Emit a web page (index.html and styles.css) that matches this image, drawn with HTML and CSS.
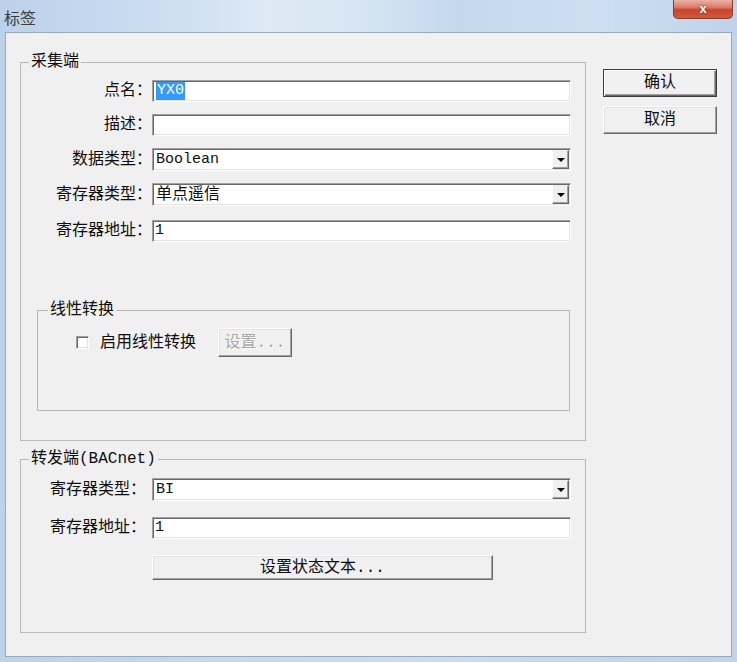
FILE: index.html
```html
<!DOCTYPE html>
<html lang="zh-CN">
<head>
<meta charset="utf-8">
<title>标签</title>
<link rel="stylesheet" href="styles.css">
</head>
<body>
<div class="window">
  <div class="titlebar">
    <span class="title">标签</span>
    <span class="close">x</span>
  </div>
  <div class="client">
    <div class="main">
      <fieldset class="group group-collect">
        <legend class="legend">采集端</legend>
        <div class="rows">
          <div class="row">
            <span class="lbl">点名：</span>
            <div class="edit"><span class="sel">YX0</span></div>
          </div>
          <div class="row">
            <span class="lbl">描述：</span>
            <div class="edit"></div>
          </div>
          <div class="row">
            <span class="lbl">数据类型：</span>
            <div class="combo"><span class="val">Boolean</span><span class="drop"><span class="tri"></span></span></div>
          </div>
          <div class="row">
            <span class="lbl">寄存器类型：</span>
            <div class="combo"><span class="val val-cjk">单点遥信</span><span class="drop"><span class="tri"></span></span></div>
          </div>
          <div class="row row-last">
            <span class="lbl">寄存器地址：</span>
            <div class="edit"><span class="val">1</span></div>
          </div>
        </div>
        <fieldset class="group group-linear">
          <legend class="legend legend-inner">线性转换</legend>
          <div class="check-row">
            <span class="checkbox"></span>
            <span class="check-label">启用线性转换</span>
            <button class="btn btn-disabled" type="button">设置...</button>
          </div>
        </fieldset>
      </fieldset>
      <fieldset class="group group-forward">
        <legend class="legend">转发端(BACnet)</legend>
        <div class="rows rows-forward">
          <div class="row">
            <span class="lbl lbl-forward">寄存器类型：</span>
            <div class="combo"><span class="val">BI</span><span class="drop"><span class="tri"></span></span></div>
          </div>
          <div class="row">
            <span class="lbl lbl-forward">寄存器地址：</span>
            <div class="edit"><span class="val">1</span></div>
          </div>
          <button class="btn btn-wide" type="button">设置状态文本...</button>
        </div>
      </fieldset>
    </div>
    <div class="side">
      <button class="btn btn-side btn-default" type="button">确认</button>
      <button class="btn btn-side" type="button">取消</button>
    </div>
  </div>
</div>
</body>
</html>
```

FILE: styles.css
```css
html, body {
  margin: 0;
  padding: 0;
}

body {
  width: 737px;
  height: 662px;
  overflow: hidden;
  background: #c2d5ea;
  font-family: "Liberation Mono", "Noto Sans CJK SC", monospace;
  font-size: 16px;
  color: #0e0e0e;
}

.window {
  display: flex;
  flex-direction: column;
  height: 662px;
  background: linear-gradient(90deg, #bdd2e8 0%, #c6d9ed 30%, #cadcee 60%, #bfd3e9 100%);
}

.titlebar {
  height: 32px;
  flex: none;
  display: flex;
  justify-content: space-between;
  align-items: flex-start;
  padding-left: 4px;
  background: linear-gradient(90deg, #bcd2ea 0%, #c8dbef 18%, #dde9f5 36%, #d8e6f3 48%, #c4d8ed 62%, #cddff1 80%, #bed3ea 100%);
}

.title {
  margin-top: 8px;
  font-family: "Noto Sans CJK SC", sans-serif;
  font-size: 16px;
  line-height: 18px;
  color: #3c3c3c;
}

.close {
  box-sizing: border-box;
  width: 60px;
  height: 19px;
  margin-right: 4px;
  border: 1px solid #8a3a2e;
  border-top: none;
  border-radius: 0 0 5px 5px;
  background: linear-gradient(#eab2a6 0%, #dc7b67 40%, #c8452c 55%, #cf5a3e 100%);
  color: #fff;
  font-family: "Liberation Sans", sans-serif;
  font-weight: bold;
  font-size: 13px;
  line-height: 17px;
  text-align: center;
  text-shadow: 0 0 2px #6a1f14;
}

.client {
  flex: 1;
  margin: 0 5px 5px;
  border: 1px solid #97aac0;
  background: #f0f0f0;
  display: flex;
  align-items: flex-start;
}

.main {
  margin-left: 14px;
  padding-top: 21px;
  display: flex;
  flex-direction: column;
}

.group {
  box-sizing: border-box;
  margin: 0;
  padding: 0;
  min-width: 0;
  border: 1px solid #b8b8b8;
}

.legend {
  margin-left: 8px;
  padding: 0 2px;
  line-height: 16px;
  font-size: 16px;
}

.legend-inner {
  margin-left: 10px;
}

.group-collect {
  width: 566px;
  height: 387px;
  padding-top: 10px;
}

.rows {
  display: flex;
  flex-direction: column;
  gap: 12px;
}

.row {
  display: flex;
  align-items: center;
}

.row-last {
  margin-top: 2px;
}

.lbl {
  width: 131px;
  text-align: right;
  line-height: 22px;
  white-space: nowrap;
}

.lbl-forward {
  width: 125px;
  margin-right: 6px;
}

.edit,
.combo {
  box-sizing: border-box;
  width: 419px;
  height: 22px;
  background: #fff;
  border: 1px solid;
  border-color: #a0a0a0 #fff #fff #a0a0a0;
  box-shadow: inset 1px 1px 0 #696969, inset -1px -1px 0 #e3e3e3;
  display: flex;
  align-items: center;
  padding-left: 2px;
  line-height: 18px;
}

.combo {
  height: 23px;
  padding: 1px 1px 1px 3px;
  align-items: stretch;
}

.combo .val {
  align-self: center;
}

.val {
  font-size: 15px;
  white-space: nowrap;
}

.val-cjk {
  font-size: 16px;
}

.sel {
  margin-left: 1px;
  padding: 0 1px;
  background: #3399ff;
  color: #fff;
  font-size: 15px;
  line-height: 18px;
}

.drop {
  box-sizing: border-box;
  width: 17px;
  margin-left: auto;
  background: #f0f0f0;
  border: 1px solid;
  border-color: #f0f0f0 #696969 #696969 #ffffff;
  box-shadow: inset -1px -1px 0 #a0a0a0;
  display: flex;
  align-items: center;
  justify-content: center;
}

.tri {
  width: 0;
  height: 0;
  border-left: 4px solid transparent;
  border-right: 4px solid transparent;
  border-top: 4px solid #000;
}

.group-linear {
  width: 533px;
  height: 109px;
  margin: 60px 0 0 16px;
  padding: 10px 0 0 0;
}

.check-row {
  display: flex;
  align-items: center;
  height: 29px;
  margin-left: 38px;
}

.checkbox {
  box-sizing: border-box;
  width: 13px;
  height: 13px;
  background: #fff;
  border: 1px solid;
  border-color: #a0a0a0 #fff #fff #a0a0a0;
  box-shadow: inset 1px 1px 0 #696969, inset -1px -1px 0 #e3e3e3;
}

.check-label {
  margin-left: 11px;
  line-height: 18px;
}

.btn {
  box-sizing: border-box;
  margin: 0;
  padding: 0;
  background: #f0f0f0;
  border: 1px solid;
  border-color: #ffffff #696969 #696969 #ffffff;
  box-shadow: inset -1px -1px 0 #a0a0a0, inset 1px 1px 0 #e3e3e3;
  font-family: "Liberation Mono", "Noto Sans CJK SC", monospace;
  font-size: 16px;
  line-height: 18px;
  color: #0e0e0e;
}

.btn-disabled {
  width: 74px;
  height: 29px;
  margin-left: 22px;
  color: #a8a8a8;
  text-shadow: 1px 1px 0 #fff;
}

.group-forward {
  width: 566px;
  height: 182px;
  margin-top: 10px;
  padding-top: 11px;
}

.rows-forward {
  gap: 16px;
}

.btn-wide {
  width: 341px;
  height: 25px;
  margin-left: 131px;
}

.side {
  width: 114px;
  margin: 36px 0 0 17px;
  display: flex;
  flex-direction: column;
  gap: 9px;
}

.btn-side {
  width: 114px;
  height: 28px;
}

.btn-default {
  border-color: #3c3c3c;
  box-shadow: inset 1px 1px 0 #fff, inset -1px -1px 0 #696969, inset -2px -2px 0 #a0a0a0;
}
```
